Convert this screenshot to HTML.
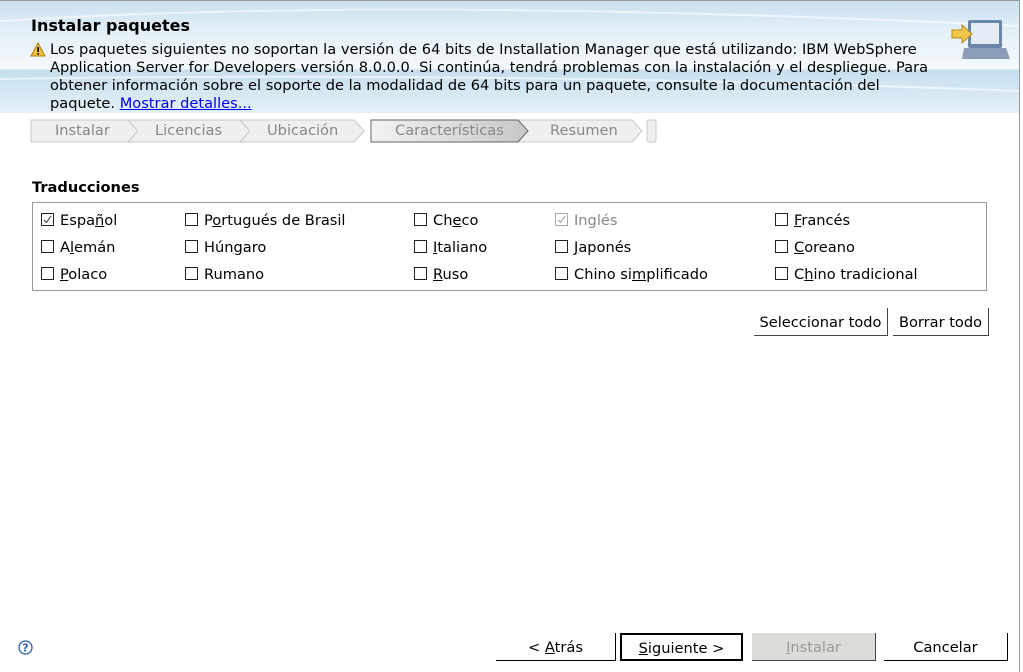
<!DOCTYPE html>
<html><head><meta charset="utf-8"><style>
*{margin:0;padding:0;box-sizing:border-box}
body{width:1023px;height:672px;background:#fff;font-family:"DejaVu Sans","Liberation Sans",sans-serif;font-size:14.6px;color:#000;position:relative;overflow:hidden}
.a{position:absolute;white-space:nowrap}
#hdr{position:absolute;left:0;top:0;width:1020px;height:113px;background:linear-gradient(180deg,#c9e0ef 0%,#e6f1f8 30%,#f4f9fc 60%,#c7dfee 62%,#e4f0f7 100%);border-top:1px solid #999}
u{text-decoration:underline}
.cb{position:absolute;width:13px;height:13px;border:1px solid #222;background:#fff}
.btn{position:absolute;height:28px;border-right:1px solid #444;border-bottom:1px solid #444;text-align:center;line-height:30px;background:#fff}
.step{position:absolute;top:120px;height:23px;color:#888;line-height:22px}
</style></head><body>
<div id="hdr">
<svg style="position:absolute;left:0;top:0" width="1020" height="113"><path d="M0 20 Q400 -5 1020 25" stroke="#fff" stroke-opacity=".6" fill="none" stroke-width="2"/><path d="M0 78 Q500 70 1020 90" stroke="#fff" stroke-opacity=".6" fill="none" stroke-width="2"/></svg>
</div>
<div style="position:absolute;left:1019px;top:0;width:1px;height:672px;background:#999"></div>
<div class="a" style="left:31px;top:16px;font-weight:bold;font-size:16px">Instalar paquetes</div>
<svg class="a" style="left:30px;top:42px" width="16" height="15"><path d="M8 1L15 14H1Z" fill="#f3c13a" stroke="#b07a10"/><rect x="7.3" y="5" width="1.6" height="5" fill="#000"/><rect x="7.3" y="11" width="1.6" height="1.6" fill="#000"/></svg>
<div class="a" style="left:50px;top:41px;line-height:18px">Los paquetes siguientes no soportan la versión de 64 bits de Installation Manager que está utilizando: IBM WebSphere<br>Application Server for Developers versión 8.0.0.0. Si continúa, tendrá problemas con la instalación y el despliegue. Para<br>obtener información sobre el soporte de la modalidad de 64 bits para un paquete, consulte la documentación del<br>paquete. <span style="color:#00e;text-decoration:underline">Mostrar detalles...</span></div>
<svg class="a" style="left:950px;top:18px" width="60" height="45"><rect x="18" y="2" width="34" height="28" rx="2" fill="#6a86a8"/><rect x="21" y="5" width="28" height="21" fill="#e6ecf6"/><path d="M14 30h42l4 11H12z" fill="#8a9cb8"/><path d="M2 12h10v-5l10 9-10 9v-5H2z" fill="#f2c64a" stroke="#b58a1c"/></svg>
<svg class="a" style="left:30px;top:119px" width="628" height="24">
<g fill="#efefef" stroke="#c8c8c8">
<path d="M1 1H98L108 12 98 23H1Z"/><path d="M98 1H210L220 12 210 23H98L108 12Z"/><path d="M210 1H324L334 12 324 23H210L220 12Z"/>
<path d="M482 1H602L612 12 602 23H482L492 12Z"/><rect x="617" y="1" width="9" height="22" rx="2"/>
</g>
<defs><linearGradient id="g" x1="0" x2="1"><stop offset="0" stop-color="#f2f2f2"/><stop offset="1" stop-color="#c8c8c8"/></linearGradient></defs>
<path d="M341 1H488L498 12 488 23H341Z" fill="url(#g)" stroke="#666"/>
</svg>
<div class="step" style="left:55px">Instalar</div>
<div class="step" style="left:155px">Licencias</div>
<div class="step" style="left:267px">Ubicación</div>
<div class="step" style="left:395px">Características</div>
<div class="step" style="left:550px">Resumen</div>
<div class="a" style="left:32px;top:179px;font-weight:bold">Traducciones</div>
<div style="position:absolute;left:32px;top:202px;width:955px;height:89px;border:1px solid #999"></div>
<div class="cb" style="left:41px;top:213px"><svg width="11" height="11" style="position:absolute"><path d="M2 6l2.5 2.5L9 2" stroke="#333" fill="none"/></svg></div>
<div class="a" style="left:60px;top:212px">Espa<u>ñ</u>ol</div>
<div class="cb" style="left:185px;top:213px"></div><div class="a" style="left:204px;top:212px">P<u>o</u>rtugués de Brasil</div>
<div class="cb" style="left:414px;top:213px"></div><div class="a" style="left:433px;top:212px">Ch<u>e</u>co</div>
<div class="cb" style="left:555px;top:213px;border-color:#aaa"><svg width="11" height="11" style="position:absolute"><path d="M2 6l2.5 2.5L9 2" stroke="#999" fill="none"/></svg></div><div class="a" style="left:574px;top:212px;color:#888">Inglés</div>
<div class="cb" style="left:775px;top:213px"></div><div class="a" style="left:794px;top:212px"><u>F</u>rancés</div>
<div class="cb" style="left:41px;top:240px"></div><div class="a" style="left:60px;top:239px">A<u>l</u>emán</div>
<div class="cb" style="left:185px;top:240px"></div><div class="a" style="left:204px;top:239px">Hún<u>g</u>aro</div>
<div class="cb" style="left:414px;top:240px"></div><div class="a" style="left:433px;top:239px"><u>I</u>taliano</div>
<div class="cb" style="left:555px;top:240px"></div><div class="a" style="left:574px;top:239px"><u>J</u>aponés</div>
<div class="cb" style="left:775px;top:240px"></div><div class="a" style="left:794px;top:239px"><u>C</u>oreano</div>
<div class="cb" style="left:41px;top:267px"></div><div class="a" style="left:60px;top:266px"><u>P</u>olaco</div>
<div class="cb" style="left:185px;top:267px"></div><div class="a" style="left:204px;top:266px">Rumano</div>
<div class="cb" style="left:414px;top:267px"></div><div class="a" style="left:433px;top:266px"><u>R</u>uso</div>
<div class="cb" style="left:555px;top:267px"></div><div class="a" style="left:574px;top:266px">Chino si<u>m</u>plificado</div>
<div class="cb" style="left:775px;top:267px"></div><div class="a" style="left:794px;top:266px">C<u>h</u>ino tradicional</div>
<div class="btn" style="left:754px;top:308px;width:134px">Seleccionar todo</div>
<div class="btn" style="left:893px;top:308px;width:96px">Borrar todo</div>
<svg class="a" style="left:18px;top:640px" width="15" height="15"><circle cx="7.5" cy="7.5" r="6.5" fill="#fff" stroke="#2a5db0" stroke-width="1.3"/><text x="7.5" y="11.5" font-size="11" font-weight="bold" text-anchor="middle" fill="#2a5db0" font-family="DejaVu Sans">?</text></svg>
<div class="btn" style="left:496px;top:633px;width:120px;border-color:#000">&lt; <u>A</u>trás</div>
<div class="btn" style="left:620px;top:633px;width:123px;border:2px solid #000;line-height:28px"><u>S</u>iguiente &gt;</div>
<div class="btn" style="left:752px;top:633px;width:124px;background:#dcdcd8;color:#999"><u>I</u>nstalar</div>
<div class="btn" style="left:884px;top:633px;width:124px;border-color:#000">Cancelar</div>
</body></html>
